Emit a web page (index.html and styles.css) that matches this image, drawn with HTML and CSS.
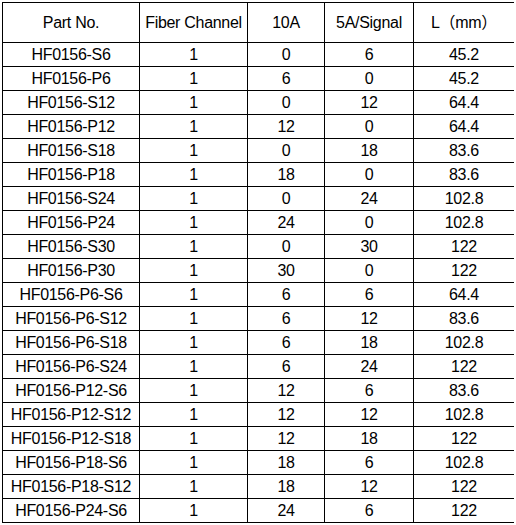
FILE: index.html
```html
<!DOCTYPE html>
<html>
<head>
<meta charset="utf-8">
<link rel="stylesheet" href="styles.css">
</head>
<body>
<table class="spec">
<colgroup>
<col class="c1"><col class="c2"><col class="c3"><col class="c4"><col class="c5">
</colgroup>
<thead>
<tr class="head"><th>Part No.</th><th>Fiber Channel</th><th>10A</th><th>5A/Signal</th><th>L（mm）</th></tr>
</thead>
<tbody>
<tr><td>HF0156-S6</td><td>1</td><td>0</td><td>6</td><td>45.2</td></tr>
<tr><td>HF0156-P6</td><td>1</td><td>6</td><td>0</td><td>45.2</td></tr>
<tr><td>HF0156-S12</td><td>1</td><td>0</td><td>12</td><td>64.4</td></tr>
<tr><td>HF0156-P12</td><td>1</td><td>12</td><td>0</td><td>64.4</td></tr>
<tr><td>HF0156-S18</td><td>1</td><td>0</td><td>18</td><td>83.6</td></tr>
<tr><td>HF0156-P18</td><td>1</td><td>18</td><td>0</td><td>83.6</td></tr>
<tr><td>HF0156-S24</td><td>1</td><td>0</td><td>24</td><td>102.8</td></tr>
<tr><td>HF0156-P24</td><td>1</td><td>24</td><td>0</td><td>102.8</td></tr>
<tr><td>HF0156-S30</td><td>1</td><td>0</td><td>30</td><td>122</td></tr>
<tr><td>HF0156-P30</td><td>1</td><td>30</td><td>0</td><td>122</td></tr>
<tr><td>HF0156-P6-S6</td><td>1</td><td>6</td><td>6</td><td>64.4</td></tr>
<tr><td>HF0156-P6-S12</td><td>1</td><td>6</td><td>12</td><td>83.6</td></tr>
<tr><td>HF0156-P6-S18</td><td>1</td><td>6</td><td>18</td><td>102.8</td></tr>
<tr><td>HF0156-P6-S24</td><td>1</td><td>6</td><td>24</td><td>122</td></tr>
<tr><td>HF0156-P12-S6</td><td>1</td><td>12</td><td>6</td><td>83.6</td></tr>
<tr><td>HF0156-P12-S12</td><td>1</td><td>12</td><td>12</td><td>102.8</td></tr>
<tr><td>HF0156-P12-S18</td><td>1</td><td>12</td><td>18</td><td>122</td></tr>
<tr><td>HF0156-P18-S6</td><td>1</td><td>18</td><td>6</td><td>102.8</td></tr>
<tr><td>HF0156-P18-S12</td><td>1</td><td>18</td><td>12</td><td>122</td></tr>
<tr><td>HF0156-P24-S6</td><td>1</td><td>24</td><td>6</td><td>122</td></tr>
</tbody>
</table>
</body>
</html>
```
FILE: styles.css
```css
html, body {
  background: #ffffff;
}
body {
  margin: 2px;
  font-family: "Liberation Sans", Arial, "Noto Sans CJK SC", sans-serif;
  font-size: 16px;
  letter-spacing: -0.3px;
  color: #000000;
}
.spec {
  border-collapse: collapse;
  table-layout: fixed;
  width: 512px;
}
.spec th, .spec td {
  border: 1px solid #000000;
  padding: 0;
  text-align: center;
  vertical-align: middle;
  font-weight: normal;
  white-space: nowrap;
  line-height: 18px;
}
.spec .head th {
  height: 39px;
}
.spec td {
  height: 23px;
}
.c1 { width: 137px; }
.c2 { width: 108px; }
.c3 { width: 77px; }
.c4 { width: 89px; }
.c5 { width: 101px; }
```
